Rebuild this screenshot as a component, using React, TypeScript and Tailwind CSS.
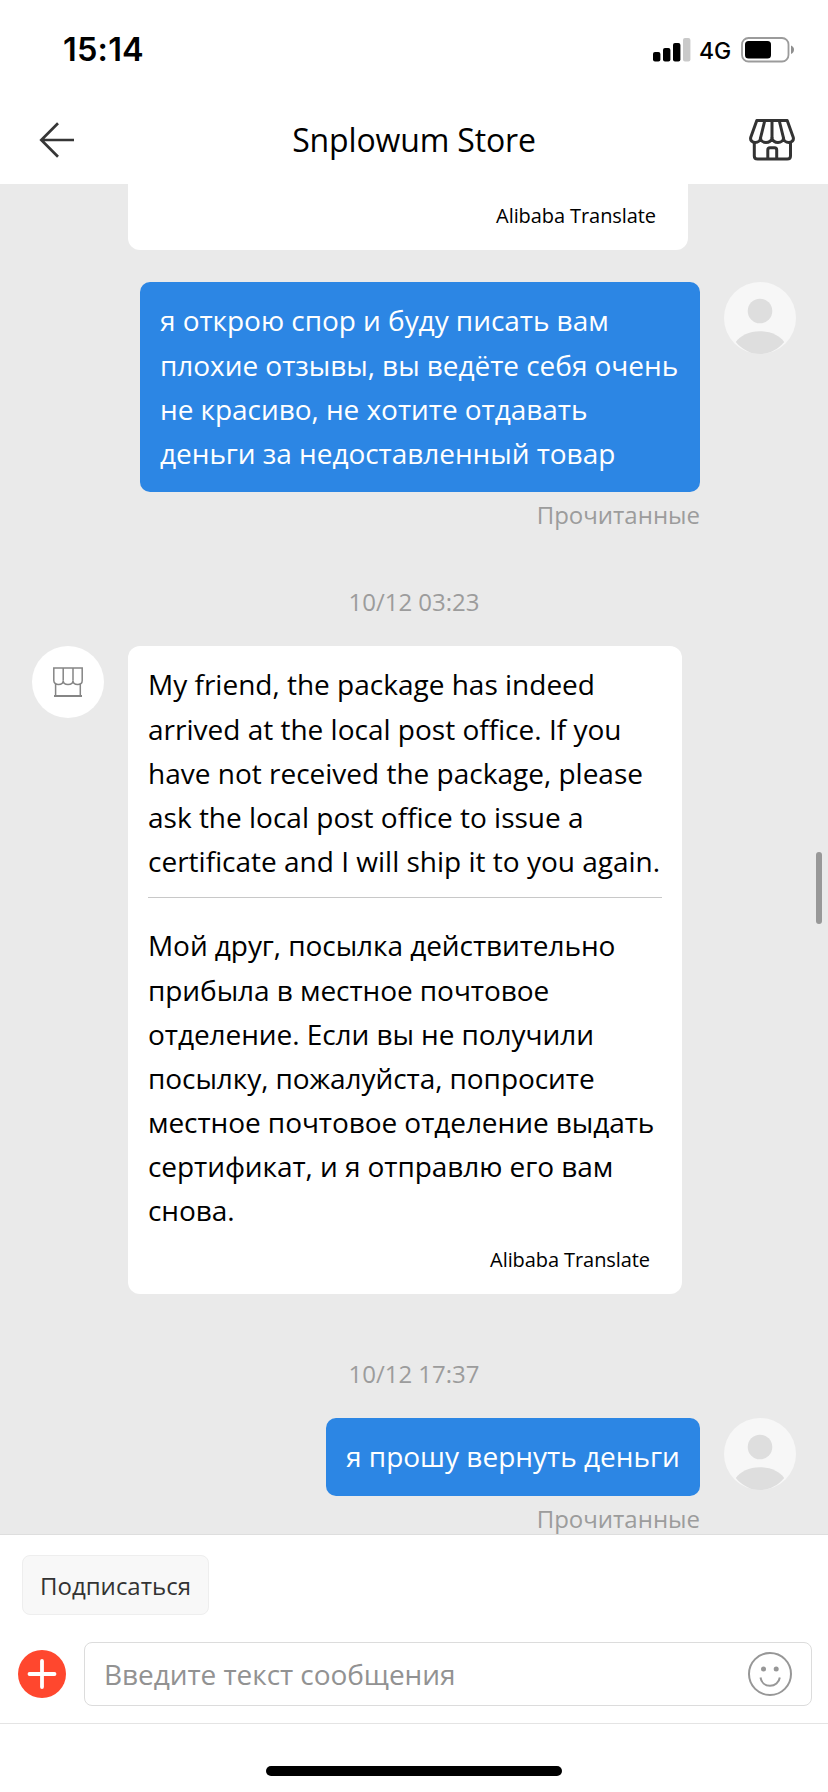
import type { ReactNode } from "react";

function SignalIcon() {
  return (
    <svg width="38" height="24" viewBox="0 0 38 24">
      <rect x="0" y="14" width="7.4" height="9.5" rx="2" fill="#000" />
      <rect x="10" y="10" width="7.4" height="13.5" rx="2" fill="#000" />
      <rect x="20" y="5" width="7.4" height="18.5" rx="2" fill="#000" />
      <rect x="30" y="0" width="7.4" height="23.5" rx="2" fill="#c9c9c9" />
    </svg>
  );
}

function BatteryIcon() {
  return (
    <svg width="54" height="26" viewBox="0 0 54 26">
      <rect x="1" y="1" width="46.5" height="23.5" rx="6.5" fill="none" stroke="#9b9b9b" strokeWidth="1.8" />
      <rect x="4" y="4" width="26" height="17.5" rx="3.5" fill="#000" />
      <path d="M50 8.6c2 .7 3 2.3 3 4.2s-1 3.5-3 4.2z" fill="#8f8f8f" />
    </svg>
  );
}

function BackIcon() {
  return (
    <svg width="36" height="36" viewBox="0 0 36 36" fill="none" stroke="#363636" strokeWidth="2.7">
      <path d="M35 18H2M19 1.3L2.3 18 19 34.7" />
    </svg>
  );
}

function ShopIcon() {
  return (
    <svg width="46" height="42" viewBox="0 0 46 42" fill="none" stroke="#333333" strokeWidth="3" strokeLinejoin="round">
      <path d="M7.8 1.6H38.2L44.3 18.6C45 21.5 42.5 23.5 39.8 23.5C37 23.5 34.5 21.5 34.5 19C34.5 21.5 32 23.5 29 23.5C26 23.5 23.2 21.5 23 19C22.8 21.5 20 23.5 17 23.5C14 23.5 11.5 21.5 11.5 19C11.5 21.5 9 23.5 6.2 23.5C3.5 23.5 1 21.5 1.7 18.6Z" />
      <path d="M15.8 1.5L11.5 19M23 1.5V19M30.2 1.5L34.5 19" />
      <path d="M5.3 23.5V37Q5.3 40 8.6 40H38.2Q41.5 40 41.5 37V23.5" />
      <path d="M18.8 40V31Q18.8 28.8 21 28.8H25.5Q27.7 28.8 27.7 31V40" />
    </svg>
  );
}

function StoreAvatar() {
  return (
    <div className="flex h-[72px] w-[72px] shrink-0 items-center justify-center rounded-full bg-white">
      <svg width="30" height="30" viewBox="0 0 30 30" fill="none" stroke="#858585" strokeWidth="1.5">
        <path d="M.8 1H29.2V13.500C29.200 16 27.500 17.500 24.700 17.500C22 17.500 20 16 20 13.500C20 16 18 17.500 15 17.500C12 17.500 10.200 16 10.200 13.500C10.200 16 8.200 17.500 5.500 17.500C2.700 17.500 .8 16 .8 13.500Z" />
        <path d="M10.2 1V13.5M20 1V13.5M2.6 16.5V29M27.3 16.5V29" />
        <path d="M1 29H29" strokeWidth="2" />
      </svg>
    </div>
  );
}

function UserAvatar() {
  return (
    <svg className="shrink-0" width="72" height="72" viewBox="0 0 72 72">
      <circle cx="36" cy="36" r="36" fill="#f7f7f7" />
      <circle cx="36" cy="29" r="12.3" fill="#dedede" />
      <path d="M11.8 60C16 54 25 49.3 36 49.3S56 54 60.2 60C54 67.5 45.5 72 36 72S18 67.5 11.8 60Z" fill="#dedede" />
    </svg>
  );
}

function SmileIcon() {
  return (
    <svg width="44" height="44" viewBox="0 0 44 44" fill="none" stroke="#979797" strokeWidth="2">
      <circle cx="22" cy="22" r="21" />
      <circle cx="15.5" cy="17" r="2.5" fill="#979797" stroke="none" />
      <circle cx="28.2" cy="17" r="2.5" fill="#979797" stroke="none" />
      <path d="M12.5 25.5C13.2 30.5 17 33.8 22 33.8S31 30.5 31.8 25.5" />
    </svg>
  );
}

function Lines({ lines }: { lines: string[] }) {
  return (
    <p className="text-[28px] leading-[44px] whitespace-nowrap">
      {lines.map((line) => (
        <span key={line} className="block first:mb-px">
          {line}
        </span>
      ))}
    </p>
  );
}

function OwnMessage({ children }: { children: ReactNode }) {
  return (
    <div className="flex justify-end gap-6 pr-8">
      <div className="flex flex-col items-end">
        {children}
        <span className="mt-2 text-[24px] leading-[30px] text-[#9c9c9c]">Прочитанные</span>
      </div>
      <UserAvatar />
    </div>
  );
}

const question = [
  "я открою спор и буду писать вам",
  "плохие отзывы, вы ведёте себя очень",
  "не красиво, не хотите отдавать",
  "деньги за недоставленный товар",
];

const reply = [
  "My friend, the package has indeed",
  "arrived at the local post office. If you",
  "have not received the package, please",
  "ask the local post office to issue a",
  "certificate and I will ship it to you again.",
];

const replyTranslated = [
  "Мой друг, посылка действительно",
  "прибыла в местное почтовое",
  "отделение. Если вы не получили",
  "посылку, пожалуйста, попросите",
  "местное почтовое отделение выдать",
  "сертификат, и я отправлю его вам",
  "снова.",
];

export default function App() {
  return (
    <div className="flex h-[1792px] w-[828px] flex-col overflow-hidden bg-white font-['Open_Sans',sans-serif] text-black">
      {/* Status bar */}
      <div className="flex h-24 shrink-0 items-center pr-[33px] pl-[63px] font-['Inter',sans-serif]">
        <span className="pt-[3px] text-[32.5px] leading-8 font-semibold tracking-[0.2px]">15:14</span>
        <div className="ml-auto flex items-center pt-[3px]">
          <SignalIcon />
          <span className="ml-[8px] w-[42px] pt-[2px] text-[23px] leading-6 font-medium">4G</span>
          <BatteryIcon />
        </div>
      </div>

      {/* Header */}
      <header className="flex h-[88px] shrink-0 items-center justify-between pr-[33px] pl-[39px]">
        <button aria-label="Назад" className="w-10">
          <BackIcon />
        </button>
        <h1 className="text-[32px] leading-10 tracking-[-0.14px]">Snplowum Store</h1>
        <button aria-label="Магазин">
          <ShopIcon />
        </button>
      </header>

      {/* Messages */}
      <main className="relative flex h-[1351px] shrink-0 flex-col overflow-hidden border-b border-[#dedede] bg-[#eaeaea]">
        <div className="ml-32 flex h-[66px] w-[560px] shrink-0 justify-end rounded-b-xl bg-white pt-[18px] pr-8">
          <span className="text-[20px] leading-7 tracking-[-0.08px]">Alibaba Translate</span>
        </div>

        <div className="mt-8">
          <OwnMessage>
            <div className="h-[210px] w-[560px] rounded-[10px] bg-[#2c86e4] px-5 pt-4 tracking-[-0.05px] text-white">
              <Lines lines={question} />
            </div>
          </OwnMessage>
        </div>

        <time className="mt-14 text-center text-[24px] leading-8 text-[#9c9c9c]">10/12 03:23</time>

        <div className="mt-7 flex gap-6 pl-8">
          <StoreAvatar />
          <div className="h-[648px] w-[554px] rounded-xl bg-white px-5 pt-4">
            <Lines lines={reply} />
            <hr className="mt-[14px] border-[#c8c8c8]" />
            <div className="mt-[25px] tracking-[-0.07px]">
              <Lines lines={replyTranslated} />
            </div>
            <p className="mt-[14px] pr-3 text-right text-[20px] leading-7 tracking-[-0.08px]">Alibaba Translate</p>
          </div>
        </div>

        <time className="mt-16 text-center text-[24px] leading-8 text-[#9c9c9c]">10/12 17:37</time>

        <div className="mt-7">
          <OwnMessage>
            <div className="h-[78px] w-[374px] rounded-[10px] bg-[#2c86e4] px-5 pt-4 text-white">
              <Lines lines={["я прошу вернуть деньги"]} />
            </div>
          </OwnMessage>
        </div>

        {/* Scroll thumb */}
        <div className="absolute top-[668px] right-[6px] h-[72px] w-[6px] rounded-full bg-[#989898]" />
      </main>

      {/* Composer */}
      <div className="h-[189px] shrink-0 border-b border-[#e4e4e4] pt-5">
        <button className="ml-[22px] flex h-[60px] w-[187px] items-center justify-center rounded-lg border border-[#eeeeee] bg-[#f8f8f8] pt-0.5 text-[24px] text-[#333333]">
          Подписаться
        </button>
        <div className="mt-[27px] flex items-center pl-[18px]">
          <button aria-label="Добавить">
            <svg width="48" height="48" viewBox="0 0 48 48">
              <circle cx="24" cy="24" r="24" fill="#ff472e" />
              <path d="M11.5 24H36.5M24 11V37" stroke="#fff" strokeWidth="3.8" strokeLinecap="round" />
            </svg>
          </button>
          <div className="ml-[18px] flex h-16 w-[728px] items-center justify-between rounded-lg border border-[#dcdcdc] pr-[19px] pl-[19px]">
            <span className="text-[28px] leading-10 tracking-[-0.06px] text-[#929292]">Введите текст сообщения</span>
            <SmileIcon />
          </div>
        </div>
      </div>

      {/* Home indicator */}
      <div className="mx-auto mt-[42px] h-[10px] w-[296px] shrink-0 rounded-full bg-black" />
    </div>
  );
}
